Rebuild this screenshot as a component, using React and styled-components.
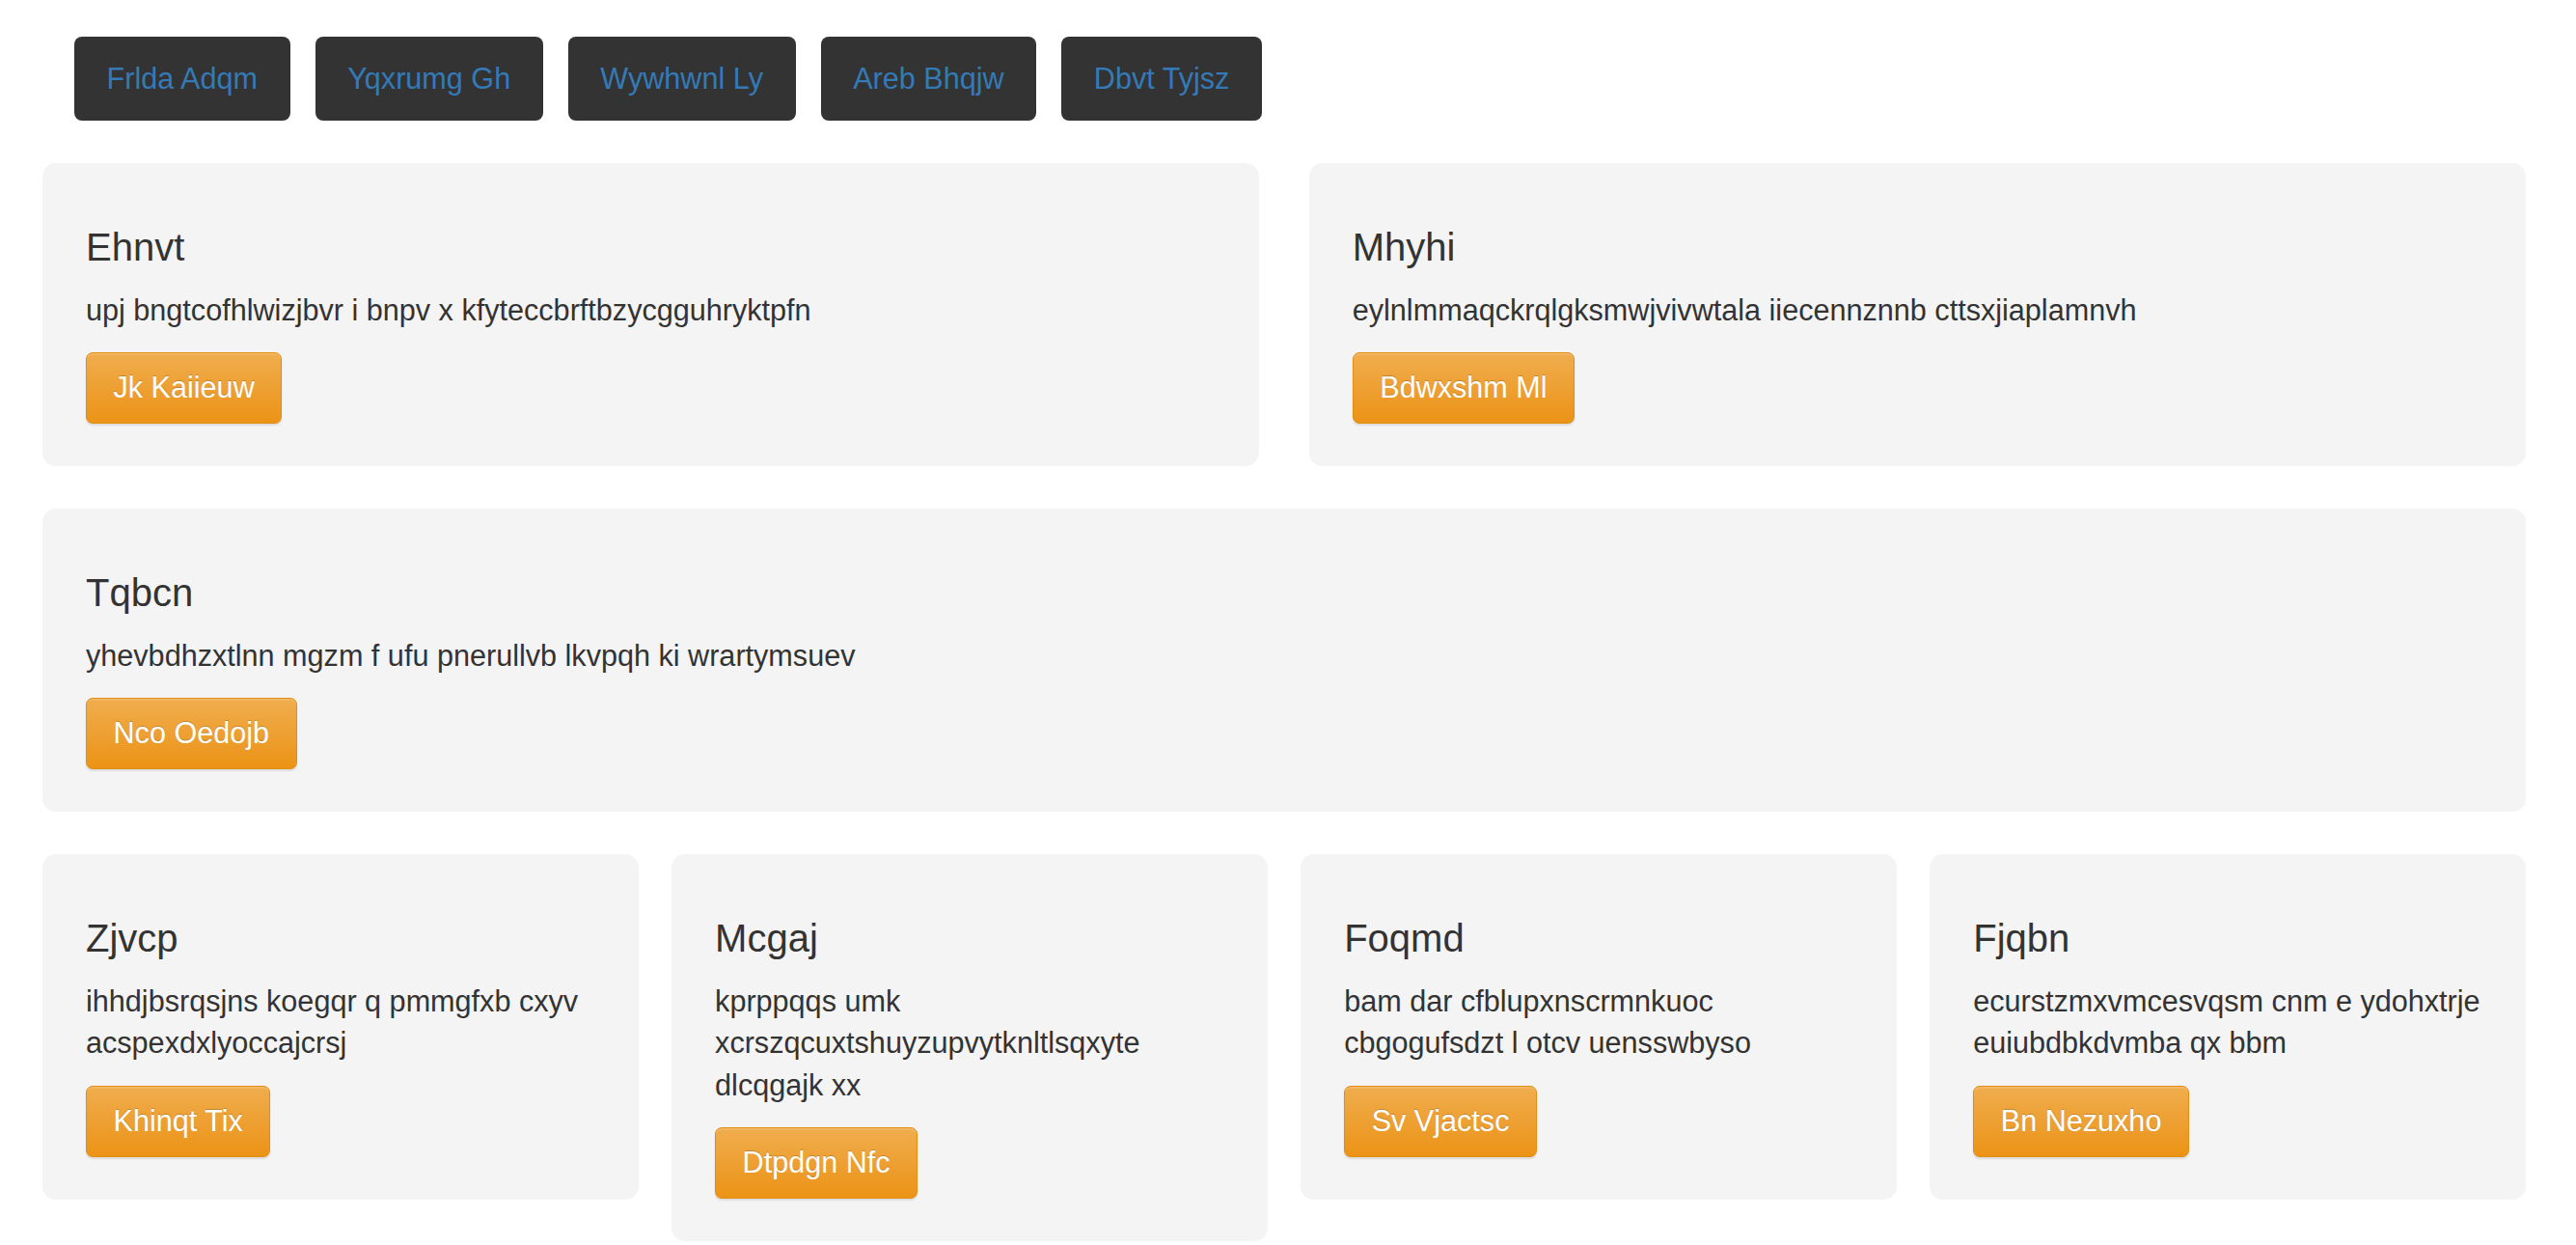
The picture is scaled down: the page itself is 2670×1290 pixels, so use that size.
import React from 'react';
import styled, { createGlobalStyle } from 'styled-components';

const GlobalStyle = createGlobalStyle`
  html, body {
    margin: 0;
    padding: 0;
    background: #ffffff;
  }
  body {
    font-family: 'Liberation Sans', Arial, Helvetica, sans-serif;
    font-size: 30.6px;
    line-height: 1.42857;
    color: #333333;
  }
`;

// ============================================================
// Page layout
// ============================================================
const Page = styled.div`
  display: flex;
  flex-direction: column;
  gap: 44.3px;
  padding: 38px 52px 8px 44px;
`;

const Nav = styled.nav`
  display: flex;
  gap: 26px;
  padding-left: 33px;
`;

const NavButton = styled.a`
  display: inline-block;
  padding: 21.6px 33.6px;
  background-color: #333333;
  border-radius: 8px;
  color: #337ab7;
  font-size: 30.6px;
  line-height: 43.7px;
  text-decoration: none;
  cursor: pointer;
`;

const Row = styled.div`
  display: flex;
  justify-content: space-between;
  align-items: flex-start;
`;

// ============================================================
// Card
// ============================================================
const Card = styled.div`
  width: ${(p) => p.$width};
  box-sizing: border-box;
  display: flex;
  flex-direction: column;
  align-items: flex-start;
  gap: 21.5px;
  padding: 65px 45px 44px;
  background-color: #f4f4f4;
  border-radius: 14px;
`;

const CardTitle = styled.h3`
  margin: 0;
  font-size: 40px;
  font-weight: 400;
  line-height: 44px;
  color: #333333;
`;

const CardText = styled.p`
  margin: 0;
  font-size: 30.6px;
  line-height: 43.7px;
`;

const ActionButton = styled.button`
  box-sizing: border-box;
  height: 74px;
  padding: 0 27.5px;
  font-family: inherit;
  font-size: 30.6px;
  line-height: 43.7px;
  color: #ffffff;
  text-shadow: 0 -1px 0 rgba(0, 0, 0, 0.2);
  background-image: linear-gradient(to bottom, #f0ad4e 0%, #eb9316 100%);
  border: 1.7px solid #e38d13;
  border-radius: 7px;
  box-shadow: inset 0 1.7px 0 rgba(255, 255, 255, 0.15), 0 1.7px 2px rgba(0, 0, 0, 0.1);
  cursor: pointer;
`;

const navItems = ['Frlda Adqm', 'Yqxrumg Gh', 'Wywhwnl Ly', 'Areb Bhqjw', 'Dbvt Tyjsz'];

const rows = [
  {
    width: '49%',
    cards: [
      { title: 'Ehnvt', text: 'upj bngtcofhlwizjbvr i bnpv x kfyteccbrftbzycgguhryktpfn', action: 'Jk Kaiieuw' },
      { title: 'Mhyhi', text: 'eylnlmmaqckrqlgksmwjvivwtala iiecennznnb cttsxjiaplamnvh', action: 'Bdwxshm Ml' },
    ],
  },
  {
    width: '100%',
    cards: [
      { title: 'Tqbcn', text: 'yhevbdhzxtlnn mgzm f ufu pnerullvb lkvpqh ki wrartymsuev', action: 'Nco Oedojb' },
    ],
  },
  {
    width: '24%',
    cards: [
      { title: 'Zjvcp', text: 'ihhdjbsrqsjns koegqr q pmmgfxb cxyv acspexdxlyoccajcrsj', action: 'Khinqt Tix' },
      { title: 'Mcgaj', text: 'kprppqqs umk xcrszqcuxtshuyzupvytknltlsqxyte dlcqgajk xx', action: 'Dtpdgn Nfc' },
      { title: 'Foqmd', text: 'bam dar cfblupxnscrmnkuoc cbgogufsdzt l otcv uensswbyso', action: 'Sv Vjactsc' },
      { title: 'Fjqbn', text: 'ecurstzmxvmcesvqsm cnm e ydohxtrje euiubdbkdvmba qx bbm', action: 'Bn Nezuxho' },
    ],
  },
];

export default function App() {
  return (
    <>
      <GlobalStyle />
      <Page>
        <Nav>
          {navItems.map((item) => (
            <NavButton key={item}>{item}</NavButton>
          ))}
        </Nav>
        {rows.map((row, i) => (
          <Row key={i}>
            {row.cards.map((card) => (
              <Card key={card.title} $width={row.width}>
                <CardTitle>{card.title}</CardTitle>
                <CardText>{card.text}</CardText>
                <ActionButton>{card.action}</ActionButton>
              </Card>
            ))}
          </Row>
        ))}
      </Page>
    </>
  );
}
